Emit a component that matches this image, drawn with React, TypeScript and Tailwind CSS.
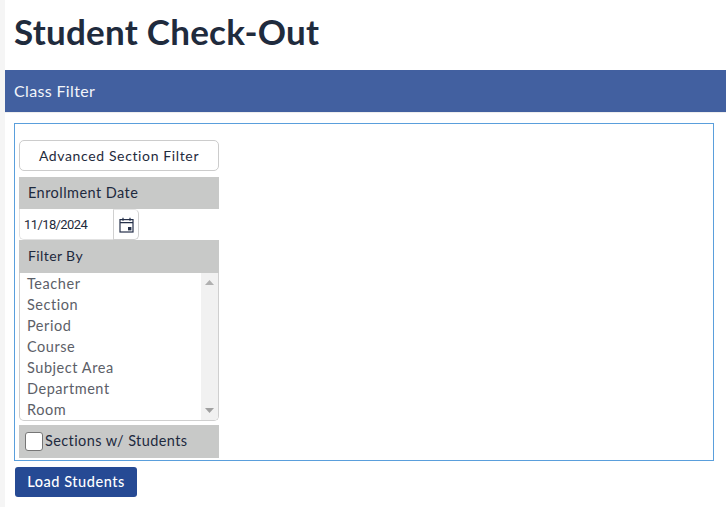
export default function App() {
  const items = ["Teacher", "Section", "Period", "Course", "Subject Area", "Department", "Room"];
  return (
    <div className="flex h-[507px] w-[726px] overflow-hidden bg-white text-[#1e2a3e] font-['Lato','Noto_Sans',sans-serif]">
      <div className="w-[5px] shrink-0 bg-[#f5f5f5]" />
      <div className="min-w-0 flex-1">
        <h1 className="h-[70px] pl-[9px] pt-[10px] text-[35px] leading-[42px] font-bold tracking-[0.25px] text-[#1f2b3d]">Student Check-Out</h1>
        <div className="flex h-[42px] items-center bg-[#4260a0] pl-[9px] text-[16px] tracking-[0.35px] text-[#f2f5fa]">Class Filter</div>
        <div className="h-[1px] bg-[#eeeeee]" />
        <div className="ml-[9px] mt-[10px] h-[338px] w-[700px] border border-[#5a9fdc] px-[4px] pt-[16px]">
          <button className="h-[31px] w-[200px] rounded-[5px] border border-[#cccccc] bg-white text-center text-[14px] tracking-[0.63px] text-[#1f2b3d]">Advanced Section Filter</button>
          <div className="mt-[6px] flex h-[32px] w-[200px] items-center bg-[#c8c9c8] pl-[9px] text-[14.5px] tracking-[0.45px]">Enrollment Date</div>
          <div className="flex h-[31px] w-[120px]">
            <div className="flex w-[94px] items-center rounded-bl-[5px] border-b border-l border-[#e2e2e2] pl-[4px] pt-[1px] font-['Roboto',sans-serif] text-[13px] tracking-[-0.6px] text-[#1f2b3d]">11/18/2024</div>
            <div className="flex w-[26px] items-center justify-center rounded-r-[5px] border border-[#d0d0d0] border-t-[#e8e8e8]">
              <svg width="15" height="16" viewBox="0 0 15 16" fill="none" stroke="#25304a" strokeWidth="1.2">
                <rect x="1" y="2.6" width="13" height="12.4" />
                <path d="M1 5.6h13M4 .8v3M11 .8v3" />
                <rect x="9" y="10" width="3.4" height="3.4" fill="#25304a" stroke="none" />
              </svg>
            </div>
          </div>
          <div className="flex h-[33px] w-[200px] items-center bg-[#c8c9c8] pb-[3px] pl-[9px] text-[14px] tracking-[0.4px]">Filter By</div>
          <div className="flex h-[148px] w-[200px] overflow-hidden rounded-b-[5px] border border-t-0 border-[#cfcfcf]">
            <ul className="flex-1 pl-[7px] text-[14.5px] leading-[21px] tracking-[0.55px] text-[#5c6068]">
              {items.map((i) => (
                <li key={i}>{i}</li>
              ))}
            </ul>
            <div className="flex w-[17px] flex-col items-center justify-between bg-[#f1f1f1] pb-[7px] pt-[7px]">
              <svg width="9" height="5" viewBox="0 0 9 5"><path d="M4.5 0L9 5H0z" fill="#b0b0b0" /></svg>
              <svg width="9" height="5" viewBox="0 0 9 5"><path d="M0 0h9L4.500 5z" fill="#a0a0a0" /></svg>
            </div>
          </div>
          <div className="mt-[4px] flex h-[33px] w-[200px] items-center bg-[#c8c9c8] pl-[6px] text-[14.5px] tracking-[0.4px]">
            <span className="h-[19px] w-[18px] rounded-[3px] border border-[#767676] bg-white" />
            <span className="ml-[2px] pb-[1px]">Sections w/ Students</span>
          </div>
        </div>
        <button className="ml-[10px] mt-[6px] h-[30px] w-[122px] rounded-[3px] bg-[#264a94] pb-[1px] text-center text-[14.5px] font-medium tracking-[0.55px] text-white">Load Students</button>
      </div>
    </div>
  );
}
